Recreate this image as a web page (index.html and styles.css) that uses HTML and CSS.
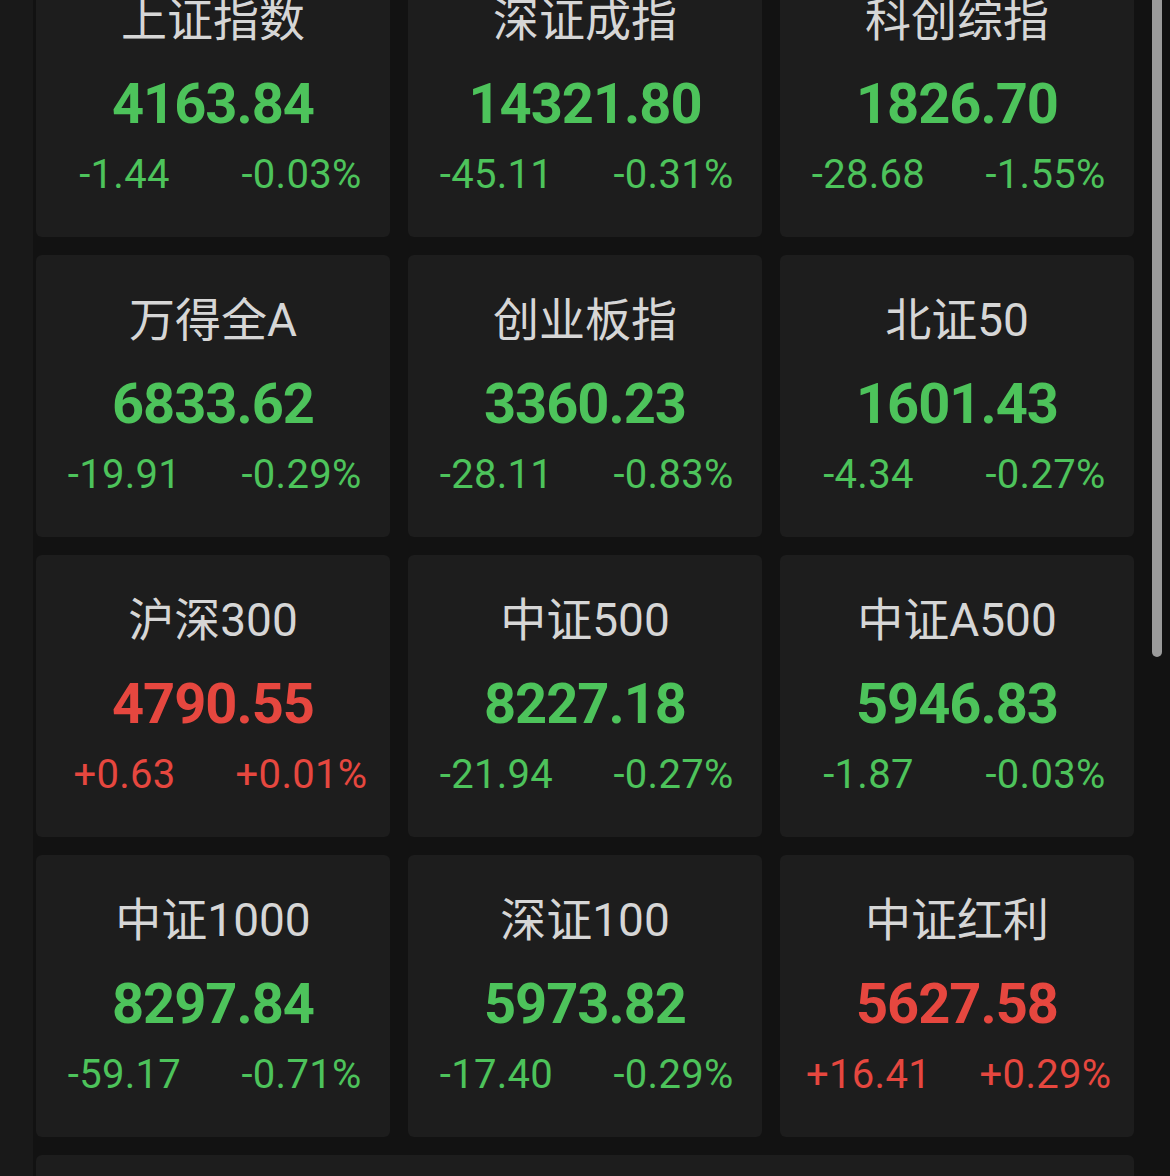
FILE: index.html
```html
<!DOCTYPE html>
<html lang="zh-CN">
<head>
<meta charset="utf-8">
<title>指数行情</title>
<link rel="stylesheet" href="styles.css">
</head>
<body>
<div class="page">
  <div class="grid">
    <div class="card"><div class="name">上证指数</div><div class="price down">4163.84</div><div class="chg down"><span>-1.44</span><span>-0.03%</span></div></div>
    <div class="card"><div class="name">深证成指</div><div class="price down">14321.80</div><div class="chg down"><span>-45.11</span><span>-0.31%</span></div></div>
    <div class="card"><div class="name">科创综指</div><div class="price down">1826.70</div><div class="chg down"><span>-28.68</span><span>-1.55%</span></div></div>

    <div class="card"><div class="name">万得全A</div><div class="price down">6833.62</div><div class="chg down"><span>-19.91</span><span>-0.29%</span></div></div>
    <div class="card"><div class="name">创业板指</div><div class="price down">3360.23</div><div class="chg down"><span>-28.11</span><span>-0.83%</span></div></div>
    <div class="card"><div class="name">北证50</div><div class="price down">1601.43</div><div class="chg down"><span>-4.34</span><span>-0.27%</span></div></div>

    <div class="card"><div class="name">沪深300</div><div class="price up">4790.55</div><div class="chg up"><span>+0.63</span><span>+0.01%</span></div></div>
    <div class="card"><div class="name">中证500</div><div class="price down">8227.18</div><div class="chg down"><span>-21.94</span><span>-0.27%</span></div></div>
    <div class="card"><div class="name">中证A500</div><div class="price down">5946.83</div><div class="chg down"><span>-1.87</span><span>-0.03%</span></div></div>

    <div class="card"><div class="name">中证1000</div><div class="price down">8297.84</div><div class="chg down"><span>-59.17</span><span>-0.71%</span></div></div>
    <div class="card"><div class="name">深证100</div><div class="price down">5973.82</div><div class="chg down"><span>-17.40</span><span>-0.29%</span></div></div>
    <div class="card"><div class="name">中证红利</div><div class="price up">5627.58</div><div class="chg up"><span>+16.41</span><span>+0.29%</span></div></div>

    <div class="card wide"></div>
  </div>
</div>
<div class="scrollbar"></div>
</body>
</html>
```

FILE: styles.css
```css
html, body {
  margin: 0;
  padding: 0;
  height: 100%;
  overflow: hidden;
  background: #191919;
}

body {
  font-family: Roboto, "Noto Sans CJK SC", sans-serif;
}

.page {
  margin-left: 33px;
  padding-left: 3px;
  padding-right: 36px;
  background: #121212;
  min-height: 100%;
}

.grid {
  margin-top: -45px;
  display: grid;
  grid-template-columns: repeat(3, 354px);
  grid-auto-rows: 282px;
  column-gap: 18px;
  row-gap: 18px;
}

.card {
  background: #1d1d1d;
  border-radius: 6px;
  display: flex;
  flex-direction: column;
  align-items: center;
}

.card.wide {
  grid-column: 1 / span 3;
}

.name {
  margin-top: 37px;
  height: 56px;
  line-height: 56px;
  font-family: Roboto, "Noto Sans CJK SC", sans-serif;
  font-size: 46px;
  color: #d6d6d6;
  white-space: nowrap;
}

.price {
  margin-top: 24px;
  height: 64px;
  line-height: 64px;
  font-size: 56px;
  font-weight: 700;
  letter-spacing: -1px;
  white-space: nowrap;
}

.chg {
  margin-top: 15px;
  width: 100%;
  height: 48px;
  line-height: 48px;
  display: flex;
  font-size: 40px;
  letter-spacing: 0.3px;
  white-space: nowrap;
}

.chg span {
  flex: 1 1 0;
  text-align: center;
}

.down { color: #4dc35b; }
.up { color: #e6473f; }

.scrollbar {
  position: absolute;
  top: 0;
  right: 8px;
  width: 10px;
  height: 657px;
  background: #9b9b9b;
  border-radius: 0 0 5px 5px;
}
```
